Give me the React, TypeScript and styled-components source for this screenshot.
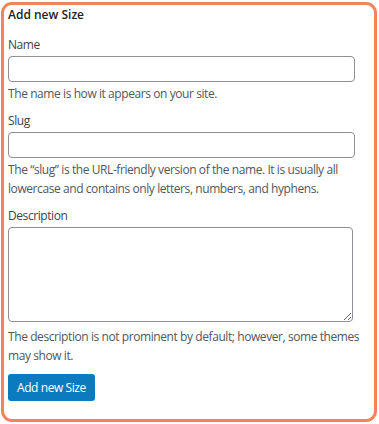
import React from "react";
import styled, { createGlobalStyle } from "styled-components";

const GlobalStyle = createGlobalStyle`
   html, body {
      margin: 0;
      padding: 0;
      background: #fff;
   }
   body {
      font-family: "Open Sans", "Noto Sans", "Liberation Sans", sans-serif;
      font-size: 12px;
      letter-spacing: -0.42px;
      color: #3c434a;
   }
`;

const Frame = styled.div`
   box-sizing: border-box;
   width: 376px;
   height: 420px;
   margin: 2px 0 0 1px;
   border: 3px solid #f2835a;
   border-radius: 11px;
   padding: 0 14px 0 4px;
   display: flex;
   flex-direction: column;
`;

const Title = styled.h2`
   margin: 0;
   font-size: 12px;
   font-weight: 600;
   letter-spacing: 0;
   color: #1d2327;
   line-height: 20px;
`;

const Field = styled.div<{ $top: number }>`
   margin-top: ${({ $top }) => $top}px;
   display: flex;
   flex-direction: column;
`;

const Label = styled.label`
   line-height: 18px;
   margin-bottom: 2px;
`;

const TextInput = styled.input`
   box-sizing: border-box;
   width: 347px;
   height: 26px;
   margin: 0;
   border: 1px solid #8c8f94;
   border-radius: 4px;
   background: #fff;
   padding: 0 8px;
   font: inherit;
`;

const TextArea = styled.textarea`
   box-sizing: border-box;
   width: 345px;
   height: 95px;
   margin: 0;
   border: 1px solid #8c8f94;
   border-radius: 4px;
   background: #fff;
   padding: 4px 8px;
   font: inherit;
   resize: both;
   display: block;
`;

const Help = styled.p<{ $gap: number }>`
   margin: ${({ $gap }) => $gap}px 0 0;
   line-height: 19px;
   color: #50575e;
`;

const SubmitButton = styled.button`
   align-self: flex-start;
   margin-top: 9px;
   height: 27px;
   padding: 0 9px;
   border: none;
   border-radius: 3px;
   background: #0b7bbf;
   color: #fff;
   font: inherit;
   letter-spacing: inherit;
   cursor: pointer;
`;

const App: React.FC = () => {
   return (
      <>
         <GlobalStyle />
         <Frame>
            <Title>Add new Size</Title>
            <Field $top={11}>
               <Label htmlFor="tag-name">Name</Label>
               <TextInput id="tag-name" type="text" />
               <Help $gap={2}>The name is how it appears on your site.</Help>
            </Field>
            <Field $top={9}>
               <Label htmlFor="tag-slug">Slug</Label>
               <TextInput id="tag-slug" type="text" />
               <Help $gap={2}>
                  The “slug” is the URL-friendly version of the name. It is usually all lowercase and
                  contains only letters, numbers, and hyphens.
               </Help>
            </Field>
            <Field $top={9}>
               <Label htmlFor="tag-description">Description</Label>
               <TextArea id="tag-description" />
               <Help $gap={5}>
                  The description is not prominent by default; however, some themes may show it.
               </Help>
            </Field>
            <SubmitButton type="button">Add new Size</SubmitButton>
         </Frame>
      </>
   );
};

export default App;
